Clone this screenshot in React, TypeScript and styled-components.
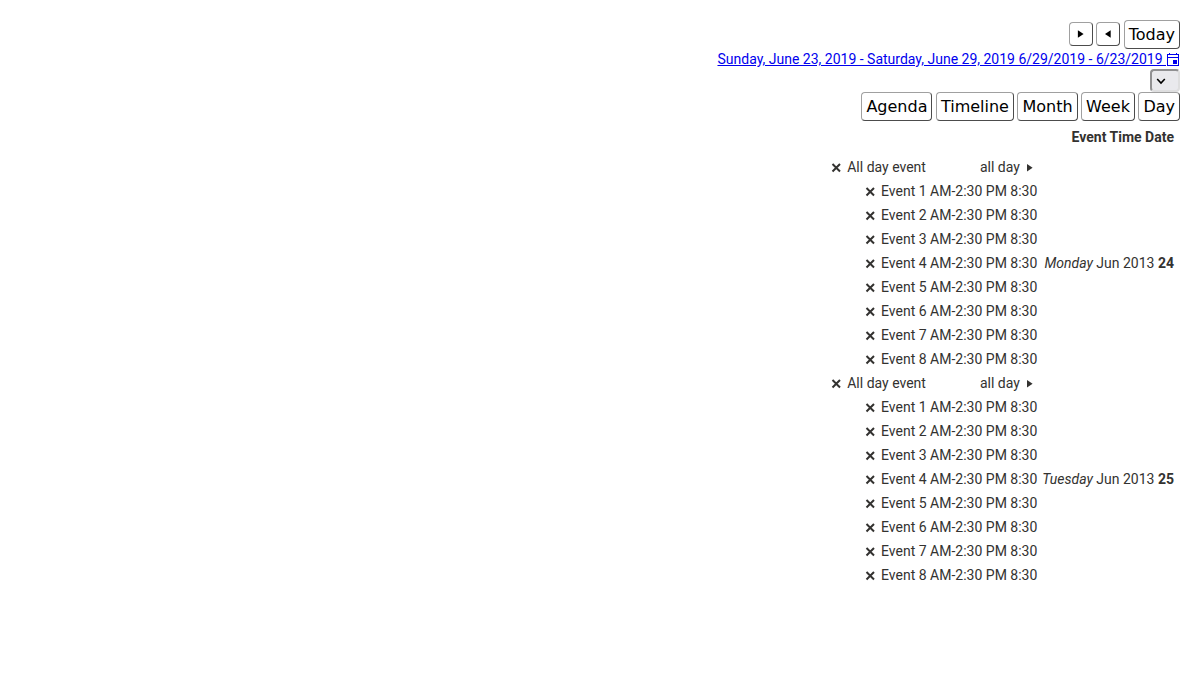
import React, { Fragment } from "react";
import styled, { createGlobalStyle } from "styled-components";

const GlobalStyle = createGlobalStyle`
  *, *::before, *::after { box-sizing: border-box; }
  body {
    margin: 0;
    background: #fff;
    color: #333230;
    font: 14px/20px Roboto, sans-serif;
  }
`;

const Page = styled.main`
  display: flex;
  flex-direction: column;
  align-items: flex-end;
  padding: 20px;
`;

const Toolbar = styled.div`
  height: 29px;
  text-align: right;
`;

const Button = styled.button<{ $square?: boolean }>`
  display: inline-flex;
  align-items: center;
  justify-content: center;
  width: ${(p) => (p.$square ? "24px" : "auto")};
  height: ${(p) => (p.$square ? "24px" : "29px")};
  margin: ${(p) => (p.$square ? "2px 0" : "0")};
  padding: ${(p) => (p.$square ? "0" : "0 4px")};
  border: 1px solid;
  border-color: #a0a0a0 #4c4c4c #4c4c4c #a0a0a0;
  border-radius: 4px;
  background: #fff;
  color: #000;
  font: 16px/19px "DejaVu Sans", sans-serif;
  vertical-align: top;
`;

const DateLink = styled.a`
  display: flex;
  align-items: center;
  height: 20px;
  color: #0000ee;
  white-space: pre;
`;

const SelectBox = styled.label`
  display: grid;
  width: 30px;
  height: 23px;
  > * { grid-area: 1 / 1; }
  svg { align-self: center; margin-left: 3px; pointer-events: none; }
`;

const Select = styled.select`
  appearance: none;
  width: 30px;
  height: 23px;
  margin: 0;
  padding: 0 4px;
  border: 2px solid;
  border-color: #909092 #dededf #dededf #909092;
  border-radius: 4px;
  background: #e9e9ed;
  color: transparent;
  font: 14px/19px Roboto, sans-serif;
`;

const Table = styled.table`
  border-collapse: collapse;
  text-align: right;
`;

const HeadCell = styled.th`
  height: 34px;
  padding: 0 6px 2px 0;
  font-weight: 700;
`;

const DateCell = styled.td`
  padding: 0 6px 0 5px;
  vertical-align: middle;
  white-space: nowrap;
`;

const EventCell = styled.td`
  height: 24px;
  padding: 0;
`;

const EventLine = styled.div`
  display: flex;
  align-items: center;
  justify-content: flex-end;
  height: 24px;
  white-space: nowrap;
`;

const AllDay = styled.span`
  display: flex;
  align-items: center;
  margin-left: 54px;
`;

const RemoveButton = styled.button`
  display: flex;
  width: 16px;
  height: 16px;
  margin-right: 3px;
  padding: 0;
  border: 0;
  background: none;
  color: inherit;
`;

const ButtonArrow = ({ left = false }: { left?: boolean }) => (
  <svg width="16" height="16" viewBox="0 0 16 16" fill="currentColor" aria-hidden="true">
    <path d={left ? "M10.7 4.2v7.6L5 8z" : "M4.9 4.2v7.6L10.6 8z"} />
  </svg>
);

const RowArrow = () => (
  <svg width="14" height="16" viewBox="0 0 14 16" fill="currentColor" aria-hidden="true">
    <path d="M4 5v7.4l5.6-3.7z" />
  </svg>
);

const Cross = () => (
  <svg width="16" height="16" viewBox="0 0 16 16" fill="none" stroke="currentColor" strokeWidth="2" aria-hidden="true">
    <path d="M4.5 5l7.5 7.5M12 5l-7.5 7.5" />
  </svg>
);

const CalendarIcon = () => (
  <svg width="14" height="16" viewBox="0 0 14 16" fill="currentColor" aria-hidden="true">
    <path d="M3 2h1v2H3zM10 2h1v2h-1zM1 3h12v1H1zM1 3h1v12H1zM12 3h1v12h-1zM1 6h12v1H1zM1 14h12v1H1zM7 9h4v4H7z" />
  </svg>
);

const views = ["Agenda", "Timeline", "Month", "Week", "Day"];
const events = Array.from({ length: 8 }, (_, i) => `Event ${i + 1}`);
const days = [
  { weekday: "Monday", day: 24 },
  { weekday: "Tuesday", day: 25 },
];

const Remove = ({ name }: { name: string }) => (
  <RemoveButton type="button" aria-label={`Delete ${name}`}><Cross /></RemoveButton>
);

export default function App() {
  return (
    <>
      <GlobalStyle />
      <Page>
        <Toolbar>
          <Button type="button" $square aria-label="Next"><ButtonArrow /></Button>{" "}
          <Button type="button" $square aria-label="Previous"><ButtonArrow left /></Button>{" "}
          <Button type="button">Today</Button>
        </Toolbar>
        <DateLink href="#">
          <span>{"Sunday, June 23, 2019 - Saturday, June 29, 2019 6/29/2019 - 6/23/2019 "}</span>
          <CalendarIcon />
        </DateLink>
        <SelectBox>
          <Select aria-label="View" defaultValue="">
            <option value="" />
            {views.map((v) => <option key={v}>{v}</option>)}
          </Select>
          <svg width="16" height="16" viewBox="0 0 16 16" fill="none" stroke="#000" strokeWidth="1.6" aria-hidden="true">
            <path d="M4.2 6l3.8 4 3.8-4" />
          </svg>
        </SelectBox>
        <Toolbar>
          {views.map((v) => (
            <Fragment key={v}><Button type="button">{v}</Button>{" "}</Fragment>
          ))}
        </Toolbar>
        <Table>
          <thead>
            <tr><HeadCell colSpan={2}>Event Time Date</HeadCell></tr>
          </thead>
          {days.map(({ weekday, day }) => (
            <tbody key={day}>
              <tr>
                <EventCell>
                  <EventLine>
                    <Remove name="All day event" />
                    All day event
                    <AllDay>all day&nbsp;<RowArrow /></AllDay>
                  </EventLine>
                </EventCell>
                <DateCell rowSpan={9}><em>{weekday}</em> Jun 2013 <b>{day}</b></DateCell>
              </tr>
              {events.map((name) => (
                <tr key={name}>
                  <EventCell>
                    <EventLine><Remove name={name} />{name} AM-2:30 PM 8:30</EventLine>
                  </EventCell>
                </tr>
              ))}
            </tbody>
          ))}
        </Table>
      </Page>
    </>
  );
}
